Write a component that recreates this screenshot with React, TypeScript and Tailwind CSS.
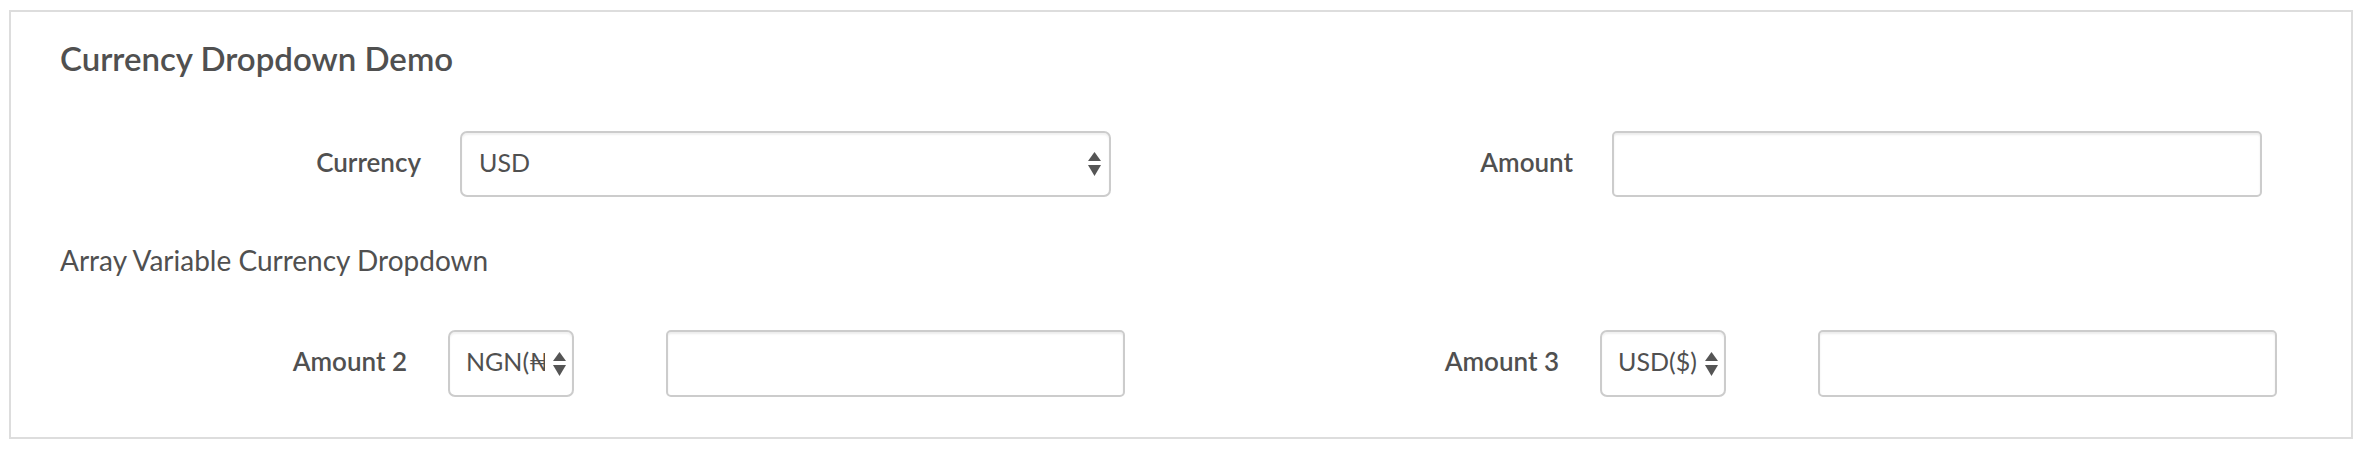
const font = { fontFamily: 'Lato, "Noto Sans", "DejaVu Sans", sans-serif' };

const Arrows = () => (
	<svg width="13" height="24" viewBox="0 0 13 24" className="shrink-0">
		<path d="M6.5 0 L13 9 L0 9 Z" fill="#555" />
		<path d="M0 13 L13 13 L6.5 24 Z" fill="#555" />
	</svg>
);

interface SelectProps {
	value: string;
	wide?: boolean;
}

const FakeSelect = ({ value, wide }: SelectProps) => {
	return (
		<div
			className={
				wide
					? 'flex items-center justify-between w-[651px] h-[66px] pl-[17px] pr-[8px] rounded-[7px] border-2 border-[#cccccc] bg-white shadow-[inset_0_2px_2px_rgba(0,0,0,0.06)]'
					: 'flex items-center justify-between gap-[8px] w-[126px] h-[67px] pl-[16px] pr-[6px] rounded-[7px] border-2 border-[#cccccc] bg-white shadow-[inset_0_2px_2px_rgba(0,0,0,0.06)]'
			}
		>
			<span className="min-w-0 pb-[3px] text-[25px] text-[#505050] whitespace-nowrap overflow-hidden">
				{value}
			</span>
			<Arrows />
		</div>
	);
};

const TextBox = ({ w, h }: { w: string; h: string }) => (
	<div
		className={`${w} ${h} rounded-[5px] border-2 border-[#cccccc] bg-white shadow-[inset_0_2px_2px_rgba(0,0,0,0.075)]`}
	/>
);

const TopField = ({ label, children }: { label: string; children: React.ReactNode }) => (
	<div className="flex items-center gap-[39px]">
		<div className="w-[361px] pb-[4px] text-right text-[26px] font-semibold text-[#505050]">{label}</div>
		{children}
	</div>
);

const ArrayField = ({ label, value }: { label: string; value: string }) => (
	<div className="flex items-center">
		<div className="w-[347px] pb-[4px] text-right text-[26px] font-semibold text-[#505050]">{label}</div>
		<div className="ml-[41px]">
			<FakeSelect value={value} />
		</div>
		<div className="ml-[92px]">
			<TextBox w="w-[459px]" h="h-[67px]" />
		</div>
	</div>
);

export default function App() {
	return (
		<div className="w-[2364px] h-[454px] bg-white" style={font}>
			<div className="ml-[9px] mt-[10px] w-[2344px] h-[429px] border-2 border-[#dddddd] pt-[28px] pl-[49px]">
				<h2 className="h-[36px] leading-[36px] text-[33px] font-semibold text-[#505050]">
					Currency Dropdown Demo
				</h2>

				<div className="mt-[55px] grid grid-cols-[1152px_1152px]">
					<TopField label="Currency">
						<FakeSelect value="USD" wide />
					</TopField>
					<TopField label="Amount">
						<TextBox w="w-[650px]" h="h-[66px]" />
					</TopField>
				</div>

				<p className="mt-[48px] h-[30px] leading-[30px] text-[28px] text-[#505050]">
					Array Variable Currency Dropdown
				</p>

				<div className="mt-[55px] grid grid-cols-[1152px_1152px]">
					<ArrayField label="Amount 2" value="NGN(₦)" />
					<ArrayField label="Amount 3" value="USD($)" />
				</div>
			</div>
		</div>
	);
}
